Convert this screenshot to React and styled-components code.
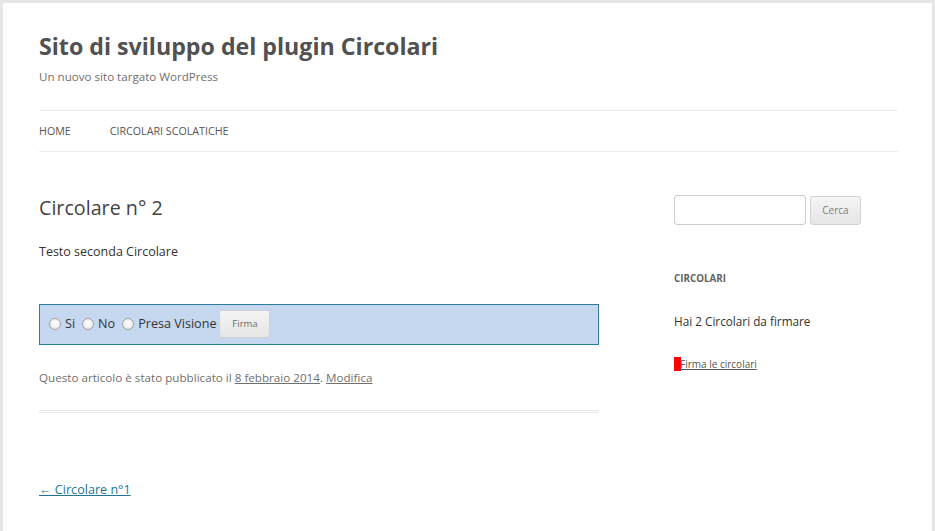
import React from "react";
import styled, { createGlobalStyle } from "styled-components";

const Global = createGlobalStyle`
  html, body { margin: 0; padding: 0; background: #e6e6e6; }
  body { font-family: "Open Sans", "Liberation Sans", sans-serif; color: #444; }
  * { box-sizing: border-box; }
`;

const Page = styled.div`
  margin: 3px 3px 0 3px;
  background: #fff;
  min-height: 528px;
  padding: 28px 34px 0 36px;
`;

const Header = styled.header``;

const SiteTitle = styled.h1`
  margin: 0;
  font-size: 23.2px;
  line-height: 31px;
  font-weight: 700;
  color: #515151;
`;

const SiteDesc = styled.h2`
  margin: 3px 0 0;
  font-size: 11.6px;
  line-height: 24px;
  font-weight: 400;
  color: #6f6f6f;
`;

const Nav = styled.nav`
  margin-top: 21px;
  border-top: 1px solid #ededed;
  border-bottom: 1px solid #ededed;
  display: flex;
  gap: 39px;
  height: 42px;
  align-items: center;
`;

const NavItem = styled.a`
  font-size: 10.7px;
  text-transform: uppercase;
  color: #555;
  text-decoration: none;
  line-height: 40px;
`;

const Main = styled.div`
  display: flex;
  justify-content: space-between;
`;

const Content = styled.main`
  width: 560px;
`;

const Article = styled.article`
  margin-top: 44px;
  padding-bottom: 20px;
  border-bottom: 3px double #e6e6e6;
`;

const EntryTitle = styled.h1`
  margin: 0;
  font-size: 19.7px;
  line-height: 24px;
  font-weight: 400;
  color: #444;
`;

const EntryText = styled.p`
  margin: 20px 0 0;
  font-size: 12.5px;
  line-height: 24px;
  color: #333;
`;

const SignBox = styled.form`
  margin-top: 40px;
  height: 41px;
  border: 1px solid #2a7e9c;
  background: #c6d8f0;
  display: flex;
  align-items: center;
  padding: 0 0 2px 9px;
  font-size: 12.6px;
  color: #333;
`;

const RadioLabel = styled.label`
  display: inline-flex;
  align-items: center;
  margin-right: 7px;
  gap: 4px;
`;

const Radio = styled.input.attrs({ type: "radio" })`
  appearance: none;
  margin: 0;
  width: 12px;
  height: 12px;
  border-radius: 50%;
  border: 1px solid #a4a4a4;
  background: radial-gradient(circle at 50% 40%, #fff 0%, #e3e3e3 100%);
`;

const FirmaButton = styled.button`
  margin-left: -4px;
  width: 51px;
  height: 28px;
  border: 1px solid #d2d2d2;
  border-radius: 2px;
  background: linear-gradient(#f4f4f4, #e6e6e6);
  font-family: "Open Sans", "Liberation Sans", sans-serif;
  font-size: 9.5px;
  color: #6a6a6a;
  padding: 0;
`;

const Meta = styled.footer`
  margin-top: 21px;
  font-size: 11.65px;
  line-height: 24px;
  color: #6f6f6f;
`;

const MetaLink = styled.a`
  color: #6f6f6f;
  text-decoration: underline;
`;

const PostNav = styled.nav`
  margin-top: 65px;
  font-size: 12.6px;
  line-height: 24px;
`;

const PrevLink = styled.a`
  color: #21759b;
  text-decoration: underline;
`;

const Sidebar = styled.aside`
  width: 224px;
  padding-top: 43px;
`;

const SearchRow = styled.form`
  display: flex;
  align-items: center;
  gap: 4px;
`;

const SearchInput = styled.input`
  width: 132px;
  height: 30px;
  border: 1px solid #ccc;
  border-radius: 3px;
  padding: 0 6px;
  font-family: inherit;
`;

const SearchButton = styled.button`
  width: 51px;
  height: 29px;
  border: 1px solid #d2d2d2;
  border-radius: 3px;
  background: linear-gradient(#f4f4f4, #e6e6e6);
  font-family: "Open Sans", "Liberation Sans", sans-serif;
  font-size: 10px;
  color: #7c7c7c;
  padding: 0;
`;

const WidgetTitle = styled.h3`
  margin: 42px 0 0;
  font-size: 9.8px;
  line-height: 24px;
  font-weight: 700;
  text-transform: uppercase;
  color: #636363;
`;

const WidgetText = styled.p`
  margin: 18px 0 0;
  font-size: 11.75px;
  line-height: 24px;
  color: #333;
`;

const WidgetLinkRow = styled.div`
  margin-top: 24px;
  display: flex;
  align-items: center;
  font-size: 10px;
  line-height: 14px;
`;

const RedMark = styled.span`
  display: inline-block;
  width: 7px;
  height: 14px;
  background: #ff0000;
`;

const WidgetLink = styled.a`
  color: #555;
  text-decoration: underline;
  margin-left: -1px;
`;

export default function App() {
  return (
    <>
      <Global />
      <Page>
        <Header>
          <SiteTitle>Sito di sviluppo del plugin Circolari</SiteTitle>
          <SiteDesc>Un nuovo sito targato WordPress</SiteDesc>
          <Nav>
            <NavItem href="#">Home</NavItem>
            <NavItem href="#">Circolari Scolatiche</NavItem>
          </Nav>
        </Header>
        <Main>
          <Content>
            <Article>
              <EntryTitle>Circolare n° 2</EntryTitle>
              <EntryText>Testo seconda Circolare</EntryText>
              <SignBox onSubmit={(e) => e.preventDefault()}>
                <RadioLabel><Radio name="f" />Si</RadioLabel>
                <RadioLabel><Radio name="f" />No</RadioLabel>
                <RadioLabel><Radio name="f" />Presa Visione</RadioLabel>
                <FirmaButton type="button">Firma</FirmaButton>
              </SignBox>
              <Meta>
                Questo articolo è stato pubblicato il <MetaLink href="#">8 febbraio 2014</MetaLink>. <MetaLink href="#">Modifica</MetaLink>
              </Meta>
            </Article>
            <PostNav>
              <PrevLink href="#">← Circolare n°1</PrevLink>
            </PostNav>
          </Content>
          <Sidebar>
            <SearchRow onSubmit={(e) => e.preventDefault()}>
              <SearchInput type="text" />
              <SearchButton type="button">Cerca</SearchButton>
            </SearchRow>
            <WidgetTitle>Circolari</WidgetTitle>
            <WidgetText>Hai 2 Circolari da firmare</WidgetText>
            <WidgetLinkRow>
              <RedMark />
              <WidgetLink href="#">Firma le circolari</WidgetLink>
            </WidgetLinkRow>
          </Sidebar>
        </Main>
      </Page>
    </>
  );
}
